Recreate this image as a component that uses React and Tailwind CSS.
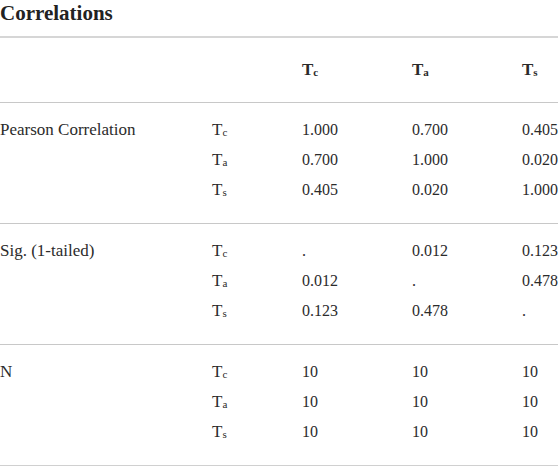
const vars = ['c', 'a', 's']

const sections = [
  {
    label: 'Pearson Correlation',
    rows: [
      ['1.000', '0.700', '0.405'],
      ['0.700', '1.000', '0.020'],
      ['0.405', '0.020', '1.000'],
    ],
  },
  {
    label: 'Sig. (1-tailed)',
    rows: [
      ['.', '0.012', '0.123'],
      ['0.012', '.', '0.478'],
      ['0.123', '0.478', '.'],
    ],
  },
  {
    label: 'N',
    rows: [
      ['10', '10', '10'],
      ['10', '10', '10'],
      ['10', '10', '10'],
    ],
  },
]

function T({ sub }) {
  return (
    <span>
      T<sub className="text-[11px] relative top-[1px]">{sub}</sub>
    </span>
  )
}

const grid = 'grid grid-cols-[212px_90px_110px_110px_1fr]'

export default function App() {
  return (
    <div
      className="w-[558px] h-[466px] bg-white text-[#2b2b2b] overflow-hidden"
      style={{ fontFamily: '"Liberation Serif", serif' }}
    >
      <h1 className="text-[21px] leading-[26px] font-bold text-[#222] h-[36px]">Correlations</h1>
      <div className="border-t-2 border-[#d6d6d6]" />
      <div className={`${grid} h-[65px] items-center text-[17px] font-bold border-b border-[#c8c8c8]`}>
        <div />
        <div />
        {vars.map((v) => (
          <div key={v}>
            <T sub={v} />
          </div>
        ))}
      </div>
      {sections.map((s, si) => (
        <div key={s.label} className={`pt-[12px] pb-[18px] text-[17px] ${si < 2 ? 'border-b border-[#c8c8c8]' : 'border-b-2 border-[#d0d0d0]'}`}>
          {s.rows.map((r, ri) => (
            <div key={ri} className={`${grid} h-[30px] items-center`}>
              <div>{ri === 0 ? s.label : ''}</div>
              <div>
                <T sub={vars[ri]} />
              </div>
              {r.map((c, ci) => (
                <div key={ci} className="text-[16px]">{c}</div>
              ))}
            </div>
          ))}
        </div>
      ))}
    </div>
  )
}
